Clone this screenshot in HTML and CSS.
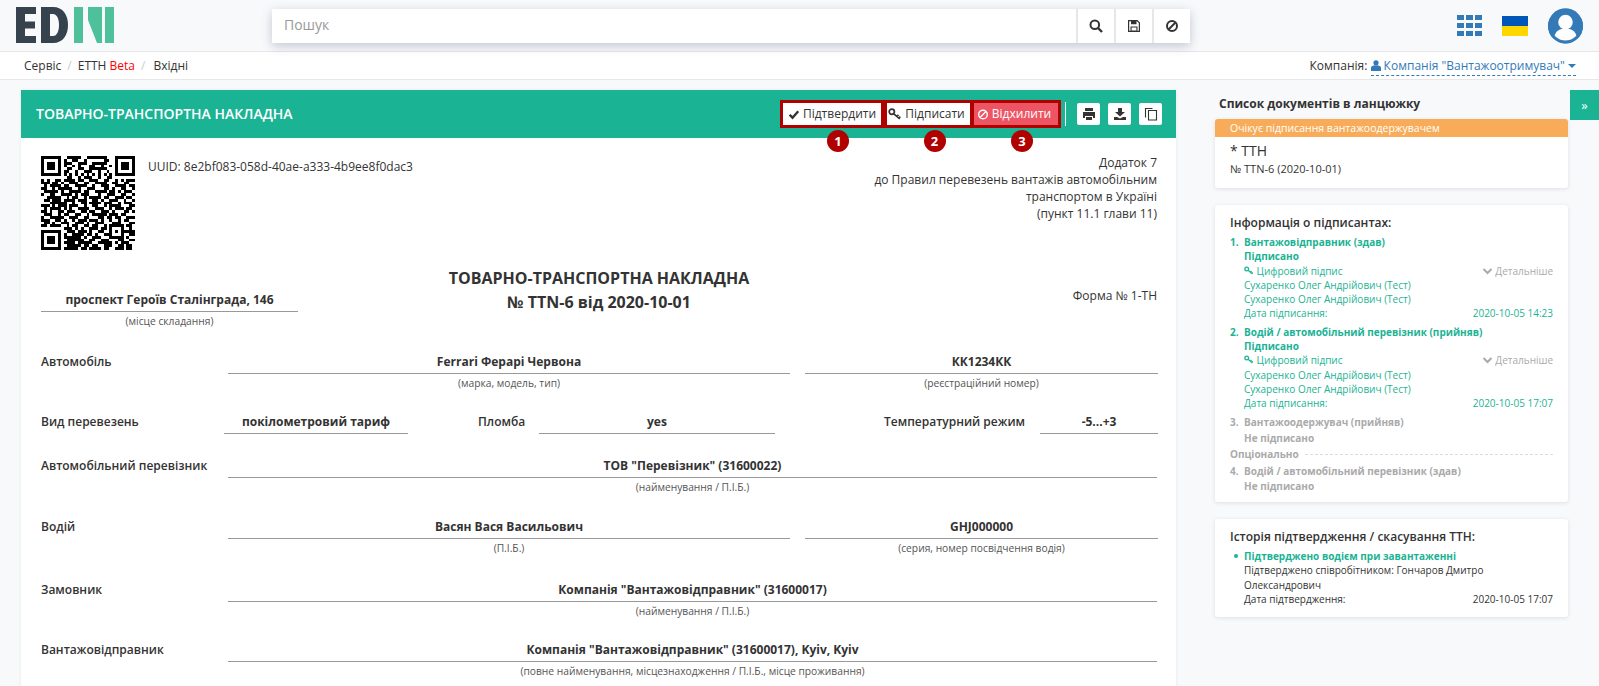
FILE: index.html
```html
<!DOCTYPE html>
<html lang="uk">
<head>
<meta charset="utf-8">
<title>EDIN</title>
<link rel="stylesheet" href="styles.css">
</head>
<body>
<header class="topbar">
  <svg class="logo" viewBox="0 0 100 36" aria-label="EDIN">
    <path fill="#36424e" d="M0 0h20v7H9v7.500h10v7H9V29h11v7H0zM25 0h12c10 0 15 8 15 18s-5 18-15 18H25zM34 7v22h3c4 0 6-5 6-11s-2-11-6-11z"/>
    <path fill="#4fc19a" d="M58 0h9v36h-9zM72 0h14v36h-5L72 13zM89 0h9v36h-9z"/>
  </svg>
  <div class="search">
    <div class="search-input">Пошук</div>
    <button class="search-btn"><svg viewBox="0 0 14 14" class="ico"><circle cx="5.800" cy="5.800" r="4.300" fill="none" stroke="#333" stroke-width="2"/><path d="M9 9l4 4" stroke="#333" stroke-width="2.400"/></svg></button>
    <button class="search-btn"><svg viewBox="0 0 14 14" class="ico"><path fill="none" stroke="#333" stroke-width="1.200" d="M1.600 1.600h8.600l2.200 2.200v8.600H1.600z"/><path fill="#333" d="M4 1.600h5.500v3.600H4zM3.500 7.500h7v4.500h-7z"/><path fill="#fff" d="M4.600 8.500h4.800v3H4.600z"/></svg></button>
    <button class="search-btn"><svg viewBox="0 0 14 14" class="ico"><circle cx="7" cy="7" r="5" fill="none" stroke="#333" stroke-width="2"/><path d="M3.500 10.500l7-7" stroke="#333" stroke-width="2"/></svg></button>
  </div>
  <div class="top-icons">
    <svg class="apps" viewBox="0 0 25 21"><path fill="#337ab7" d="M0 0h7v5H0zM9 0h7v5H9zM18 0h7v5h-7zM0 8h7v5H0zM9 8h7v5H9zM18 8h7v5h-7zM0 16h7v5H0zM9 16h7v5H9zM18 16h7v5h-7z"/></svg>
    <svg class="flag" viewBox="0 0 26 20"><path fill="#0057b7" d="M0 0h26v10H0z"/><path fill="#ffd700" d="M0 10h26v10H0z"/></svg>
    <svg class="avatar" viewBox="0 0 36 36"><circle cx="18" cy="18" r="18" fill="#337ab7"/><circle cx="18" cy="14" r="7.500" fill="#fff"/><path fill="#fff" d="M6.500 29c1-6 6-8.500 11.500-8.500S28.500 23 29.500 29c-3 3-7 4.500-11.500 4.500S9.500 32 6.500 29z"/><circle cx="18" cy="18" r="16.500" fill="none" stroke="#337ab7" stroke-width="3"/></svg>
  </div>
</header>

<nav class="crumbs">
  <div class="crumb-list">
    <span>Сервіс</span><span class="sep">/</span><span>ЕТТН <b class="beta">Beta</b></span><span class="sep">/</span><span class="crumb-last">Вхідні</span>
  </div>
  <div class="company">Компанія:
    <span class="company-link"><svg viewBox="0 0 10 11" class="user-ico"><circle cx="5" cy="2.800" r="2.600" fill="#337ab7"/><path fill="#337ab7" d="M0 11V8c0-1.800 1.500-2.700 5-2.700S10 6.200 10 8v3z"/></svg> Компанія "Вантажоотримувач" <i class="caret"></i></span>
  </div>
</nav>

<div class="page">
  <main class="doc-card">
    <div class="doc-head">
      <h1 class="doc-head-title">ТОВАРНО-ТРАНСПОРТНА НАКЛАДНА</h1>
      <div class="actions">
        <button class="act"><svg viewBox="0 0 12 12" class="act-ico"><path d="M1.200 6.300l3.200 3.200 6.200-7" fill="none" stroke="#333" stroke-width="2.600"/></svg>Підтвердити<span class="badge">1</span></button>
        <button class="act act-pad"><svg viewBox="0 0 14 12" class="act-ico key"><circle cx="3.800" cy="3.800" r="2.600" fill="none" stroke="#333" stroke-width="1.700"/><path d="M5.800 5.800l6 5M9 8.300l1.500-1.500M11 10l1.300-1.300" fill="none" stroke="#333" stroke-width="1.700"/></svg>Підписати<span class="badge">2</span></button>
        <button class="act act-pad act-danger"><svg viewBox="0 0 12 12" class="act-ico"><circle cx="6" cy="6" r="4.700" fill="none" stroke="#fff" stroke-width="1.500"/><path d="M2.800 9.200l6.400-6.400" stroke="#fff" stroke-width="1.500"/></svg>Відхилити<span class="badge">3</span></button>
        <span class="divider"></span>
        <button class="tool"><svg viewBox="0 0 14 14" class="ico"><path fill="#333" d="M3 1h8v3H3zM1 5h12v6h-2V9H3v2H1zM4 10h6v3H4z"/></svg></button>
        <button class="tool"><svg viewBox="0 0 14 14" class="ico"><path fill="#333" d="M5 1h4v4h3L7 9.500 2 5h3zM1 10h3l3 1.500 3-1.500h3v3H1z"/></svg></button>
        <button class="tool"><svg viewBox="0 0 14 14" class="ico"><path fill="none" stroke="#333" stroke-width="1.100" d="M1.500 10.500v-9h7M4.500 3.500h8v9.500h-8z"/></svg></button>
      </div>
    </div>

    <div class="doc-body">
      <div class="intro">
        <svg class="qr" viewBox="0 0 33 33" shape-rendering="crispEdges"><path stroke="#000" stroke-width="1" fill="none" d="M0 .5h7M9 .5h5M16 .5h7M26 .5h7M0 1.500h1M6 1.500h1M8 1.500h1M11 1.500h2M15 1.500h1M22 1.500h2M26 1.500h1M32 1.500h1M0 2.500h1M2 2.500h3M6 2.500h1M8 2.500h3M13 2.500h3M18 2.500h5M26 2.500h1M28 2.500h3M32 2.500h1M0 3.500h1M2 3.500h3M6 3.500h1M8 3.500h1M11 3.500h1M13 3.500h1M17 3.500h2M21 3.500h1M24 3.500h1M26 3.500h1M28 3.500h3M32 3.500h1M0 4.500h1M2 4.500h3M6 4.500h1M9 4.500h2M13 4.500h2M17 4.500h6M26 4.500h1M28 4.500h3M32 4.500h1M0 5.500h1M6 5.500h1M8 5.500h2M12 5.500h1M15 5.500h3M20 5.500h1M23 5.500h1M26 5.500h1M32 5.500h1M0 6.500h7M8 6.500h1M10 6.500h1M12 6.500h1M14 6.500h1M16 6.500h1M18 6.500h1M20 6.500h1M22 6.500h1M24 6.500h1M26 6.500h7M9 7.500h2M13 7.500h1M15 7.500h3M20 7.500h1M23 7.500h2M0 8.500h1M2 8.500h1M5 8.500h2M8 8.500h4M13 8.500h2M17 8.500h3M22 8.500h2M26 8.500h1M28 8.500h1M30 8.500h3M0 9.500h3M4 9.500h2M7 9.500h1M10 9.500h3M15 9.500h2M19 9.500h4M25 9.500h2M29 9.500h2M1 10.500h1M3 10.500h4M8 10.500h2M12 10.500h4M18 10.500h1M21 10.500h3M26 10.500h4M31 10.500h2M0 11.500h2M4 11.500h1M6 11.500h5M13 11.500h1M16 11.500h3M22 11.500h2M25 11.500h1M28 11.500h2M32 11.500h1M1 12.500h5M7 12.500h1M10 12.500h4M15 12.500h2M19 12.500h4M24 12.500h2M27 12.500h1M29 12.500h3M0 13.500h1M3 13.500h2M7 13.500h4M12 13.500h1M14 13.500h3M20 13.500h1M23 13.500h3M28 13.500h2M32 13.500h1M2 14.500h4M6 14.500h1M9 14.500h1M11 14.500h2M15 14.500h1M17 14.500h4M22 14.500h2M26 14.500h3M30 14.500h2M1 15.500h2M4 15.500h3M8 15.500h4M13 15.500h3M18 15.500h2M21 15.500h1M24 15.500h3M29 15.500h1M32 15.500h1M3 16.500h4M7 16.500h2M11 16.500h1M14 16.500h2M17 16.500h4M22 16.500h3M27 16.500h1M29 16.500h3M0 17.500h3M4 17.500h1M6 17.500h3M10 17.500h3M15 17.500h1M18 17.500h2M22 17.500h1M24 17.500h4M31 17.500h2M1 18.500h1M3 18.500h4M8 18.500h1M10 18.500h1M13 18.500h4M19 18.500h3M24 18.500h1M26 18.500h3M30 18.500h2M0 19.500h2M3 19.500h1M6 19.500h2M9 19.500h3M14 19.500h2M17 19.500h2M21 19.500h3M25 19.500h1M29 19.500h2M32 19.500h1M1 20.500h3M6 20.500h1M8 20.500h2M12 20.500h2M16 20.500h1M18 20.500h5M24 20.500h3M28 20.500h2M0 21.500h1M3 21.500h5M10 21.500h3M15 21.500h2M20 21.500h2M23 21.500h2M26 21.500h2M30 21.500h3M0 22.500h3M5 22.500h2M8 22.500h1M11 22.500h1M13 22.500h3M17 22.500h3M21 22.500h1M24 22.500h1M27 22.500h1M29 22.500h2M1 23.500h2M4 23.500h1M7 23.500h3M12 23.500h3M16 23.500h1M19 23.500h3M25 23.500h3M31 23.500h2M0 24.500h2M3 24.500h4M9 24.500h1M11 24.500h2M15 24.500h2M18 24.500h2M22 24.500h1M24 24.500h5M30 24.500h2M8 25.500h3M12 25.500h1M14 25.500h1M17 25.500h3M21 25.500h2M24 25.500h1M28 25.500h1M31 25.500h1M0 26.500h7M9 26.500h3M13 26.500h3M17 26.500h1M20 26.500h2M24 26.500h1M26 26.500h1M28 26.500h5M0 27.500h1M6 27.500h1M8 27.500h1M11 27.500h4M16 27.500h2M19 27.500h1M22 27.500h2M24 27.500h1M28 27.500h1M31 27.500h2M0 28.500h1M2 28.500h3M6 28.500h1M8 28.500h6M15 28.500h1M18 28.500h3M24 28.500h5M30 28.500h1M0 29.500h1M2 29.500h3M6 29.500h1M9 29.500h6M17 29.500h2M21 29.500h3M27 29.500h2M31 29.500h2M0 30.500h1M2 30.500h3M6 30.500h1M8 30.500h4M13 30.500h5M20 30.500h5M26 30.500h1M28 30.500h3M0 31.500h1M6 31.500h1M9 31.500h5M15 31.500h2M18 31.500h2M22 31.500h3M27 31.500h2M30 31.500h2M0 32.500h7M8 32.500h5M14 32.500h2M17 32.500h4M22 32.500h2M26 32.500h3M30 32.500h2"/></svg>
        <div class="uuid">UUID: 8e2bf083-058d-40ae-a333-4b9ee8f0dac3</div>
        <div class="annex">Додаток 7<br>до Правил перевезень вантажів автомобільним<br>транспортом в Україні<br>(пункт 11.1 глави 11)</div>
      </div>

      <div class="title-row">
        <div class="place">
          <div class="value">проспект Героїв Сталінграда, 146</div>
          <div class="hint">(місце складання)</div>
        </div>
        <h2 class="doc-title">ТОВАРНО-ТРАНСПОРТНА НАКЛАДНА<br>№ TTN-6 від 2020-10-01</h2>
        <div class="form-no">Форма № 1-ТН</div>
      </div>

      <div class="row row-car">
        <div class="label">Автомобіль</div>
        <div class="field field-main"><div class="value">Ferrari Ферарі Червона</div><div class="hint">(марка, модель, тип)</div></div>
        <div class="field field-side"><div class="value">КК1234КК</div><div class="hint">(реєстраційний номер)</div></div>
      </div>

      <div class="row row-kind">
        <div class="label label-kind">Вид перевезень</div>
        <div class="field field-tariff"><div class="value">покілометровий тариф</div></div>
        <div class="label label-seal">Пломба</div>
        <div class="field field-seal"><div class="value">yes</div></div>
        <div class="label label-temp">Температурний режим</div>
        <div class="field field-temp"><div class="value">-5...+3</div></div>
      </div>

      <div class="row row-carrier">
        <div class="label">Автомобільний перевізник</div>
        <div class="field"><div class="value">ТОВ "Перевізник" (31600022)</div><div class="hint">(найменування / П.І.Б.)</div></div>
      </div>

      <div class="row row-driver">
        <div class="label">Водій</div>
        <div class="field field-main"><div class="value">Васян Вася Васильович</div><div class="hint">(П.І.Б.)</div></div>
        <div class="field field-side"><div class="value">GHJ000000</div><div class="hint">(серия, номер посвідчення водія)</div></div>
      </div>

      <div class="row row-customer">
        <div class="label">Замовник</div>
        <div class="field"><div class="value">Компанія "Вантажовідправник" (31600017)</div><div class="hint">(найменування / П.І.Б.)</div></div>
      </div>

      <div class="row row-shipper">
        <div class="label">Вантажовідправник</div>
        <div class="field"><div class="value">Компанія "Вантажовідправник" (31600017), Kyiv, Kyiv</div><div class="hint">(повне найменування, місцезнаходження / П.І.Б., місце проживання)</div></div>
      </div>
    </div>
  </main>

  <aside class="side">
    <h3 class="side-title">Список документів в ланцюжку</h3>
    <section class="panel chain">
      <div class="chain-status">Очікує підписання вантажоодержувачем</div>
      <div class="chain-body">
        <div class="chain-name">* ТТН</div>
        <div class="chain-no">№ TTN-6 (2020-10-01)</div>
      </div>
    </section>

    <section class="panel info">
      <h4 class="panel-title">Інформація о підписантах:</h4>
      <div class="signer signed">
        <div class="signer-head"><span class="num">1.</span>Вантажовідправник (здав)</div>
        <div class="signer-line strong">Підписано</div>
        <div class="signer-line split"><span><svg viewBox="0 0 14 12" class="key-ico"><circle cx="3.800" cy="3.800" r="2.600" fill="none" stroke="#1ab394" stroke-width="1.800"/><path d="M5.800 5.800l6 5M9 8.300l1.500-1.500M11 10l1.300-1.300" fill="none" stroke="#1ab394" stroke-width="1.800"/></svg> Цифровий підпис</span><span class="more"><svg viewBox="0 0 10 7" class="chev"><path d="M1 1l4 4 4-4" fill="none" stroke="#aaa" stroke-width="2"/></svg> Детальніше</span></div>
        <div class="signer-line">Сухаренко Олег Андрійович (Тест)</div>
        <div class="signer-line">Сухаренко Олег Андрійович (Тест)</div>
        <div class="signer-line split"><span>Дата підписання:</span><span>2020-10-05 14:23</span></div>
      </div>
      <div class="signer signed">
        <div class="signer-head"><span class="num">2.</span>Водій / автомобільний перевізник (прийняв)</div>
        <div class="signer-line strong">Підписано</div>
        <div class="signer-line split"><span><svg viewBox="0 0 14 12" class="key-ico"><circle cx="3.800" cy="3.800" r="2.600" fill="none" stroke="#1ab394" stroke-width="1.800"/><path d="M5.800 5.800l6 5M9 8.300l1.500-1.500M11 10l1.300-1.300" fill="none" stroke="#1ab394" stroke-width="1.800"/></svg> Цифровий підпис</span><span class="more"><svg viewBox="0 0 10 7" class="chev"><path d="M1 1l4 4 4-4" fill="none" stroke="#aaa" stroke-width="2"/></svg> Детальніше</span></div>
        <div class="signer-line">Сухаренко Олег Андрійович (Тест)</div>
        <div class="signer-line">Сухаренко Олег Андрійович (Тест)</div>
        <div class="signer-line split"><span>Дата підписання:</span><span>2020-10-05 17:07</span></div>
      </div>
      <div class="signer pending">
        <div class="signer-head"><span class="num">3.</span>Вантажоодержувач (прийняв)</div>
        <div class="signer-line strong spaced">Не підписано</div>
      </div>
      <div class="optional"><span>Опціонально</span></div>
      <div class="signer pending tight">
        <div class="signer-head"><span class="num">4.</span>Водій / автомобільний перевізник (здав)</div>
        <div class="signer-line strong">Не підписано</div>
      </div>
    </section>

    <section class="panel history">
      <h4 class="panel-title">Історія підтвердження / скасування ТТН:</h4>
      <div class="history-item">
        <div class="history-head">Підтверджено водієм при завантаженні</div>
        <div class="signer-line">Підтверджено співробітником: Гончаров Дмитро Олександрович</div>
        <div class="signer-line split"><span>Дата підтвердження:</span><span>2020-10-05 17:07</span></div>
      </div>
    </section>
  </aside>
  <button class="side-toggle">»</button>
</div>
</body>
</html>
```

FILE: styles.css
```css
* { box-sizing: border-box; }
html, body { height: 100%; }
body {
  margin: 0;
  overflow: hidden;
  background: #f8f9fb;
  color: #333;
  font: 12px/1.43 "Open Sans", "Noto Sans", sans-serif;
}
button { font: inherit; cursor: pointer; }
h1, h2, h3, h4 { margin: 0; }

.topbar {
  height: 52px;
  display: flex;
  align-items: flex-start;
  background: #f8f9fb;
  border-bottom: 1px solid #e7e7ea;
}
.logo { width: 100px; height: 36px; margin: 7px 0 0 16px; flex: none; }
.search {
  margin: 9px 0 0 156px;
  width: 918px;
  height: 34px;
  display: flex;
  background: #e7e7e7;
  gap: 2px;
  box-shadow: 0 3px 10px rgba(60, 70, 100, .28);
}
.search-input {
  flex: 1;
  background: #fff;
  padding: 6px 12px;
  font-size: 14px;
  color: #999;
}
.search-btn {
  width: 36px;
  border: 0;
  padding: 0;
  background: #fff;
  display: flex;
  align-items: center;
  justify-content: center;
}
.ico { width: 14px; height: 14px; display: block; }
.top-icons { margin-left: auto; display: flex; align-items: center; height: 51px; padding-right: 16px; }
.apps { width: 25px; height: 21px; margin-right: 20px; }
.flag { width: 26px; height: 20px; margin-right: 20px; }
.avatar { width: 35px; height: 36px; }

.crumbs {
  height: 28px;
  background: #fff;
  border-bottom: 1px solid #e7e7ea;
  display: flex;
  justify-content: space-between;
  align-items: center;
  padding: 0 23px 0 24px;
}
.crumb-list { display: flex; }
.sep { color: #ccc; margin: 0 6px; }
.crumb-last { margin-left: 2px; }
.beta { color: #f00; font-weight: 400; }
.company-link { color: #337ab7; border-bottom: 1px dashed #337ab7; padding-bottom: 1px; }
.user-ico { width: 10px; height: 11px; vertical-align: -1px; }
.caret {
  display: inline-block;
  border: 4px solid transparent;
  border-top-color: #337ab7;
  border-bottom: 0;
  vertical-align: 2px;
}

.page { position: relative; display: flex; align-items: flex-start; padding: 10px 31px 0 21px; }
.doc-card { width: 1155px; background: #fff; flex: none; height: 620px; box-shadow: 0 0 3px rgba(0,0,0,.08); }
.doc-head {
  height: 48px;
  background: #1ab394;
  display: flex;
  align-items: center;
  justify-content: space-between;
  padding: 0 14px 0 15px;
}
.doc-head-title { font-size: 14px; font-weight: 600; color: #fff; }
.actions { display: flex; align-items: center; }
.act {
  position: relative;
  height: 22px;
  width: 98px;
  padding: 0;
  margin-right: 6px;
  background: #fff;
  border: 0;
  color: #333;
  outline: 3px solid #b00000;
  display: flex;
  align-items: center;
  justify-content: center;
  gap: 3px;
}
.act-pad { padding-right: 4px; }
.act:nth-child(2) { width: 83px; margin-right: 4px; }
.act:nth-child(3) { width: 84px; margin-right: 0; }
.act-danger { background: #ed5565; color: #fff; }
.act-ico { width: 12px; height: 11px; }
.act-ico.key { width: 14px; height: 12px; }
.badge {
  position: absolute;
  left: 50%;
  top: 27px;
  width: 22px;
  height: 22px;
  margin-left: -5px;
  border-radius: 50%;
  background: #b00000;
  color: #fff;
  font-weight: 700;
  font-size: 13px;
  line-height: 22px;
  text-align: center;
}
.divider { width: 1px; height: 24px; background: #fff; margin: 0 11px 0 7px; }
.tool {
  width: 23px;
  height: 22px;
  margin-left: 8px;
  border: 0;
  border-radius: 2px;
  background: #fff;
  padding: 0;
  display: flex;
  align-items: center;
  justify-content: center;
}
.divider + .tool { margin-left: 0; }

.doc-body { padding: 18px 19px 0 20px; }
.intro { display: flex; align-items: flex-start; height: 103px; }
.qr { width: 94px; height: 94px; flex: none; }
.uuid { margin: 2px 0 0 13px; line-height: 17px; }
.annex { margin: -2px 0 0 auto; text-align: right; line-height: 17px; }

.title-row { display: flex; align-items: flex-start; margin-top: 7px; height: 72px; }
.place { width: 257px; margin-top: 23px; flex: none; text-align: center; }
.doc-title { flex: 1; text-align: center; font-size: 16px; font-weight: 700; line-height: 24px; }
.form-no { width: 257px; text-align: right; margin-top: 21px; flex: none; }

.value { border-bottom: 1px solid #999; text-align: center; font-weight: 700; line-height: 18px; height: 23px; padding-top: 2px; }
.hint { font-size: 10.250px; line-height: 14px; text-align: center; color: #555; margin-top: 2px; }

.row { display: flex; align-items: flex-start; }
.label { flex: none; width: 187px; line-height: 18px; padding-top: 2px; font-weight: 600; }
.field { flex: 1; min-width: 0; }
.field-main { flex: none; width: 562px; margin-right: 15px; }
.field-side { flex: none; width: 353px; }
.row-car { margin-top: 13px; height: 60px; }
.row-kind { height: 44px; }
.label-kind { width: 183px; }
.field-tariff { flex: none; width: 184px; }
.label-seal { width: 61px; margin-left: 70px; }
.field-seal { flex: none; width: 236px; }
.label-temp { width: 156px; margin-left: 109px; }
.field-temp { flex: none; width: 118px; }
.row-carrier { height: 61px; }
.row-driver { height: 63px; }
.row-customer { height: 60px; }

.side { flex: none; width: 353px; margin-left: 39px; }
.side-title { font-size: 12px; font-weight: 700; line-height: 17px; margin: 5px 0 7px 4px; }
.panel {
  background: #fff;
  border-radius: 3px;
  box-shadow: 0 1px 4px rgba(60, 70, 100, .14);
  margin-bottom: 17px;
  font-size: 10px;
  line-height: 14.300px;
}
.chain { height: 69px; overflow: hidden; }
.chain-status { height: 18px; line-height: 18px; background: #f8ac59; color: #fff; padding-left: 15px; font-size: 10.500px; }
.chain-body { padding: 4px 15px; }
.chain-name { font-size: 14px; line-height: 20px; }
.chain-no { font-size: 11px; line-height: 16px; }
.info { height: 297px; padding: 9px 15px; }
.panel-title { font-size: 12px; font-weight: 600; line-height: 17px; margin-bottom: 4px; }
.signer { margin-bottom: 4px; padding-left: 14px; position: relative; }
.signer.signed { color: #1ab394; }
.signer.pending { color: #aaa; }
.signer.tight { margin: 0; }
.signer-head { font-weight: 700; }
.num { position: absolute; left: 0; font-weight: 700; }
.strong { font-weight: 700; }
.spaced { margin-top: 2px; }
.split { display: flex; justify-content: space-between; }
.key-ico { width: 10px; height: 9px; }
.more { color: #aaa; }
.chev { width: 11px; height: 7px; vertical-align: 0; }
.optional {
  font-weight: 700;
  color: #aaa;
  display: flex;
  align-items: center;
  gap: 6px;
  margin: -2px 0 3px;
}
.optional::after { content: ""; flex: 1; border-top: 1px dashed #ddd; }
.history { height: 98px; padding: 9px 15px; }
.history-item { padding-left: 14px; position: relative; }
.history-item::before {
  content: "";
  position: absolute;
  left: 4px;
  top: 5px;
  width: 4px;
  height: 4px;
  border-radius: 50%;
  background: #1ab394;
}
.history-head { color: #1ab394; font-weight: 700; }
.side-toggle {
  position: absolute;
  right: 0;
  top: 10px;
  width: 29px;
  height: 30px;
  border: 0;
  padding: 0;
  background: #1ab394;
  color: #fff;
  font-size: 13px;
}
```
